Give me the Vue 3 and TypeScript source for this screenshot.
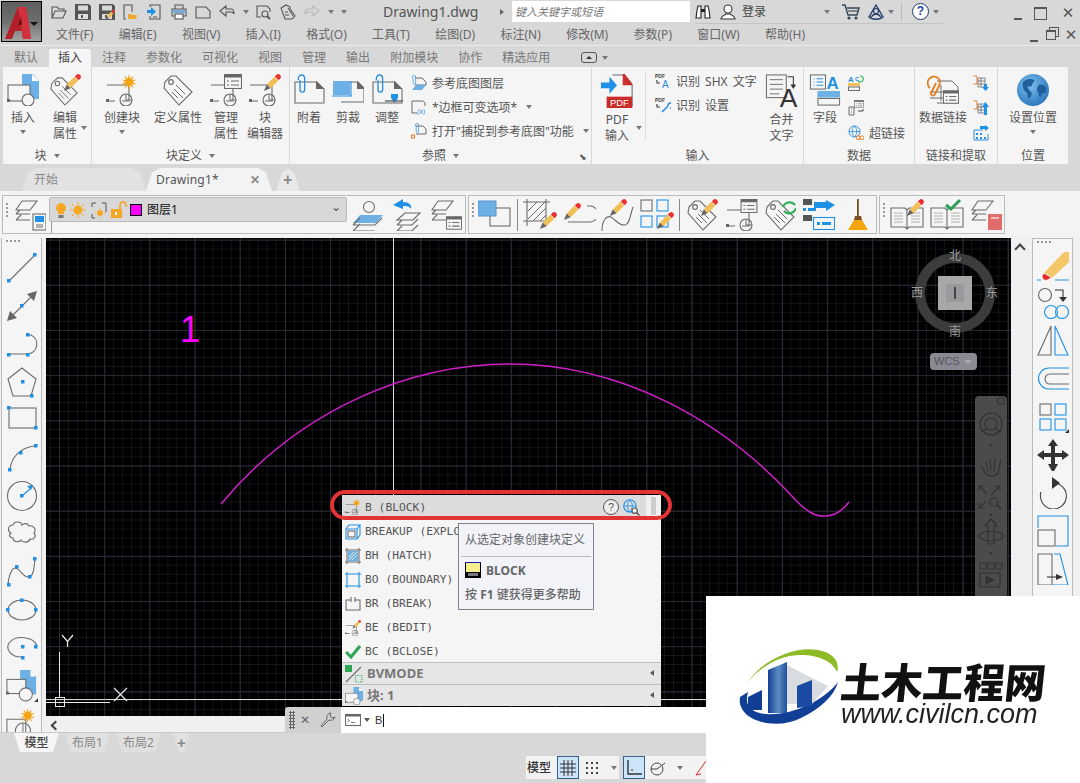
<template>
  <div class="app">
    <!-- shared icon drawings -->
    <svg class="defs" width="0" height="0">
      <defs>
        <radialGradient id="globe-fill" cx="40%" cy="35%" r="70%">
          <stop offset="0" stop-color="#7cc0ee" />
          <stop offset="1" stop-color="#2a75bb" />
        </radialGradient>
        <linearGradient id="tower-fill" x1="0" x2="1" y1="0" y2="0">
          <stop offset="0" stop-color="#123f96" />
          <stop offset="0.55" stop-color="#5f8cc4" />
          <stop offset="1" stop-color="#1d4fa0" />
        </linearGradient>
        <symbol id="pen" viewBox="0 0 20 20">
          <polygon points="5,11 13,3 17,7 9,15" fill="#f0bf55" stroke="none" />
          <polygon points="5,11 9,15 2,18" fill="#666" stroke="none" />
          <path d="M13.5 2.5l1.5-1.5a2.6 2.6 0 0 1 4 4l-1.5 1.5z" fill="#ec2f2f" stroke="none" />
        </symbol>
        <symbol id="clip" viewBox="0 0 10 20">
          <path d="M2 6V4a3 3 0 0 1 6 0v11a2.2 2.2 0 0 1-4.400 0V6" stroke="#2a8fe0" stroke-width="1.300" fill="none" />
        </symbol>
        <symbol id="tag" viewBox="0 0 32 32">
          <path d="M3 8l6-6 5 0 16 16-13 13L2 14z" />
          <circle cx="9" cy="8" r="2.400" />
          <path d="M14 11l9 9M12 15l9 9M10 18l6 6" stroke-width="1" />
        </symbol>
        <symbol id="base" viewBox="0 0 32 32">
          <path d="M1 11h22v16H16M9 27H1z" />
          <circle cx="20" cy="26" r="6" />
          <path d="M20 20v6h6" stroke-width="1" />
          <rect x="0" y="25" width="3" height="3" fill="#666" stroke="none" />
        </symbol>
        <symbol id="card" viewBox="0 0 18 15">
          <rect x="0.500" y="0.500" width="17" height="14" fill="#f5f5f5" />
          <rect x="0.500" y="0.500" width="17" height="3" fill="#666" stroke="none" />
          <path d="M3 7h2M7 7h8M3 11h2M7 11h8" stroke-width="1.200" />
        </symbol>
        <symbol id="page" viewBox="0 0 32 32">
          <path d="M2 8h22l7 7v14H2z" />
          <path d="M23 7l8 8h-8z" fill="#666" stroke="none" />
        </symbol>

        <symbol id="i-insert" viewBox="0 0 32 32">
          <path d="M15 0h11l6 7v18H15z" fill="#6cb0e6" stroke="none" />
          <path d="M25 0l7 7h-7z" fill="#fff" stroke="none" />
          <rect x="1" y="11" width="22" height="16" fill="#f5f5f5" />
          <circle cx="21" cy="26" r="6" fill="#f5f5f5" />
          <rect x="0" y="25" width="3" height="3" fill="#666" stroke="none" />
        </symbol>
        <symbol id="i-editattr" viewBox="0 0 32 32">
          <use href="#tag" width="30" height="30" y="2" />
          <use href="#pen" x="13" y="0" width="19" height="19" />
        </symbol>
        <symbol id="i-create" viewBox="0 0 32 32">
          <use href="#base" />
          <polygon :points="burst(23, 8, 8, 3.500, 10)" fill="#f4a20f" stroke="none" />
        </symbol>
        <symbol id="i-attmgr" viewBox="0 0 32 32">
          <use href="#base" />
          <use href="#card" x="14" y="0" width="18" height="15" />
        </symbol>
        <symbol id="i-bedit" viewBox="0 0 32 32">
          <use href="#base" />
          <use href="#pen" x="13" y="0" width="19" height="19" />
        </symbol>
        <symbol id="i-attach" viewBox="0 0 32 32">
          <use href="#page" />
          <use href="#clip" x="3" y="0" width="11" height="21" />
        </symbol>
        <symbol id="i-clipdoc" viewBox="0 0 32 32">
          <path d="M9 14V8h17l6 6v14H9" />
          <path d="M25 7l8 8h-8z" fill="#666" stroke="none" />
          <rect x="1" y="7" width="17" height="14" fill="#6cb0e6" stroke="none" />
          <path d="M0 22h20M19 7v15" stroke="#2a8fe0" />
        </symbol>
        <symbol id="i-adjust" viewBox="0 0 32 32">
          <use href="#page" />
          <use href="#clip" x="3" y="0" width="11" height="21" />
          <path d="M20 20h7v4l-3.500 5-3.500-5z" fill="#1e90e6" stroke="none" />
          <path d="M14 27h18" stroke-width="1.400" stroke="#666" />
        </symbol>
        <symbol id="s-underlay" viewBox="0 0 16 16">
          <path d="M4 3h7l4 4v3H4" stroke-width="1" />
          <use href="#clip" x="0" y="0" width="6" height="11" />
          <path d="M1 15l4-5h10l-4 5z" fill="#6cb0e6" stroke="none" />
        </symbol>
        <symbol id="s-frame" viewBox="0 0 16 16">
          <path d="M6 14H1V2h11l2 2v3" stroke-width="1" />
          <text x="6" y="15" font-size="7" fill="#2a8fe0" stroke="none" font-style="italic" font-family="Liberation Sans">(x)</text>
        </symbol>
        <symbol id="s-snap" viewBox="0 0 16 16">
          <path d="M5 3h7l3 3v5H5" stroke-width="1" />
          <use href="#clip" x="3" y="0" width="6" height="11" />
          <rect x="0.500" y="12" width="3" height="3" stroke="#e67a1e" stroke-width="1" />
        </symbol>
        <symbol id="i-pdf" viewBox="0 0 34 36">
          <path d="M12 1h13l8 10v23H7V24" />
          <path d="M23 0h2l8 10v2H23z" fill="#c9302c" stroke="none" />
          <rect x="6" y="24" width="27" height="12" fill="#cb2b2b" stroke="none" />
          <text x="19.500" y="34" font-size="10" font-family="Liberation Sans" fill="#fff" stroke="none" text-anchor="middle">PDF</text>
          <path d="M0 10h9V4l8 9-8 9v-6H0z" fill="#1e90e6" stroke="none" transform="translate(0 -1)" />
        </symbol>
        <symbol id="s-pdfa" viewBox="0 0 16 16">
          <text x="0" y="5" font-size="5" font-weight="700" font-family="Liberation Sans" fill="#444" stroke="none">PDF</text>
          <path d="M2 7v3h3" stroke="#444" stroke-width="1.200" />
          <text x="7" y="15" font-size="10" font-family="Liberation Sans" fill="#2a8fe0" stroke="none">A</text>
        </symbol>
        <symbol id="s-pdfw" viewBox="0 0 16 16">
          <text x="0" y="5" font-size="5" font-weight="700" font-family="Liberation Sans" fill="#444" stroke="none">PDF</text>
          <path d="M2 7v3h3" stroke="#444" stroke-width="1.200" />
          <path d="M7 15l6-6M13 9a2.500 2.500 0 1 1 2 2" stroke="#2a8fe0" stroke-width="1.600" />
        </symbol>
        <symbol id="i-merge" viewBox="0 0 34 36">
          <rect x="0.500" y="1" width="21" height="24" fill="#f5f5f5" />
          <path d="M4 6h14M4 11h14M4 16h14M4 21h10" stroke-width="1" />
          <path d="M23 3h6v9" stroke="#333" />
          <path d="M26 11h6l-3 5z" fill="#333" stroke="none" />
          <text x="24" y="35" font-size="28" font-family="Liberation Sans" fill="#333" stroke="none" text-anchor="middle">A</text>
        </symbol>
        <symbol id="i-field" viewBox="0 0 32 34">
          <rect x="0.500" y="1" width="16" height="15" />
          <path d="M4 5h1M7 5h7M4 8.500h1M7 8.500h7M4 12h1M7 12h7" stroke="#2a8fe0" stroke-width="1.200" />
          <text x="24" y="16" font-size="18" font-weight="700" font-family="Liberation Sans" fill="#1e90e6" stroke="none" text-anchor="middle">A</text>
          <rect x="8" y="18" width="24" height="7" fill="#6cb0e6" stroke="none" />
          <rect x="8.500" y="26" width="23" height="7" />
        </symbol>
        <symbol id="s-fieldedit" viewBox="0 0 16 16">
          <text x="0" y="7" font-size="8" font-weight="700" font-family="Liberation Sans" fill="#2a8fe0" stroke="none">A</text>
          <text x="7" y="6" font-size="6" font-weight="700" font-family="Liberation Sans" fill="#2a8fe0" stroke="none">C</text>
          <path d="M12 1a3 3 0 1 1-2 5" stroke="#3bb35f" stroke-width="1.200" />
          <rect x="0" y="8" width="12" height="3" fill="#f0bf55" stroke="none" />
          <rect x="0.500" y="12" width="11" height="3.500" stroke-width="1" />
        </symbol>
        <symbol id="s-tablejump" viewBox="0 0 16 16">
          <use href="#card" x="6" y="0" width="10" height="8" />
          <path d="M1 7h5v8H1zM3 9h1M3 12h1" stroke-width="1" />
          <path d="M15 9v2h-5" stroke="#444" stroke-width="1" />
        </symbol>
        <symbol id="s-link" viewBox="0 0 16 16">
          <circle cx="6.500" cy="6.500" r="5.500" stroke="#2a8fe0" stroke-width="1" />
          <path d="M1 6.500h11M6.500 1c-3 3-3 8 0 11M6.500 1c3 3 3 8 0 11" stroke="#2a8fe0" stroke-width="0.800" />
          <rect x="8.500" y="11" width="4" height="3.500" rx="1.500" stroke="#e67a1e" stroke-width="1" fill="#f5f5f5" />
          <rect x="12" y="11" width="4" height="3.500" rx="1.500" stroke="#e67a1e" stroke-width="1" />
        </symbol>
        <symbol id="i-datalink" viewBox="0 0 32 32">
          <path d="M10 7h15l6 6v16H10" stroke-width="1" />
          <path d="M3 18h18M3 24h18M14 11v16" stroke-width="1" />
          <path d="M3 14a4 4 0 0 1 8-10c3 2 2 7 0 10l-3 6a2 2 0 0 1-4-1l5-10" stroke="#e67a1e" stroke-width="1.800" />
          <use href="#card" x="16" y="16" width="16" height="14" />
        </symbol>
        <symbol id="s-lnkdown" viewBox="0 0 16 16">
          <path d="M1 2a1.500 1.500 0 0 1 3 0v6a1.500 1.500 0 0 1-3 0" stroke="#e67a1e" stroke-width="1" />
          <path d="M5 3h7v9H5zM5 6h7M5 9h7M8 3v9" stroke-width="0.800" />
          <path d="M11 9h3v3h2l-3.500 4-3.500-4h2z" fill="#1e90e6" stroke="none" />
        </symbol>
        <symbol id="s-lnkup" viewBox="0 0 16 16">
          <path d="M1 2a1.500 1.500 0 0 1 3 0v6a1.500 1.500 0 0 1-3 0" stroke="#e67a1e" stroke-width="1" />
          <path d="M5 4h7v9H5zM5 7h7M5 10h7M8 4v9" stroke-width="0.800" />
          <path d="M11 15V7H9l3.500-5L16 7h-2v8z" fill="#1e90e6" stroke="none" />
        </symbol>
        <symbol id="s-extract" viewBox="0 0 16 16">
          <path d="M1 5h9M1 5v10h14V9" stroke="#2a8fe0" stroke-width="1" />
          <path d="M7 1h5V0l4 3-4 3V4H7z" fill="#1e90e6" stroke="none" />
          <path d="M3 8h2v2H3zM7 8h2v2H7zM3 12h2v2H3zM7 12h2v2H7zM11 12h2v2h-2z" fill="#2a8fe0" stroke="none" />
        </symbol>
        <symbol id="i-globe" viewBox="0 0 32 32">
          <circle cx="16" cy="16" r="16" fill="url(#globe-fill)" stroke="none" />
          <path d="M6 8c3-3 8-4 11-2 1 2-2 3-2 5s-3 2-4 1 0 4 3 6c2 2-1 6-2 7-2-2-1-6-3-7S5 13 6 8z" fill="#1f5f9c" stroke="none" />
          <path d="M22 11c2-1 5 0 7 2 1 4-1 7-3 6-2 0-1 3-3 4-2-2-1-5-3-6 0-2 0-4 2-6z" fill="#1f5f9c" stroke="none" />
        </symbol>

        <!-- quick access bar -->
        <symbol id="q-open" viewBox="0 0 16 16">
          <path d="M1 14V3h5l2 2h5v2M1 14l3-7h11l-3 7z" stroke="#555" />
        </symbol>
        <symbol id="q-save" viewBox="0 0 16 16">
          <path d="M0 0h14l2 2v14H0z" fill="#555" stroke="none" />
          <rect x="3" y="1.500" width="10" height="5" fill="#d8d8d8" stroke="none" />
          <rect x="3" y="10" width="10" height="5" fill="#ddd" stroke="none" />
          <rect x="6" y="11" width="2" height="3" fill="#555" stroke="none" />
        </symbol>
        <symbol id="q-saveas" viewBox="0 0 16 16">
          <use href="#q-save" />
          <use href="#pen" x="5" y="6" width="11" height="11" />
        </symbol>
        <symbol id="q-phoneopen" viewBox="0 0 16 16">
          <path d="M3 15H1V1h8v7" stroke="#555" />
          <path d="M5 15v-5h3l1 1h5l-1 4z" fill="#f0a72e" stroke="none" />
        </symbol>
        <symbol id="q-phoneup" viewBox="0 0 16 16">
          <path d="M3 3V1h10v14H3v-3M6 13h4" stroke="#555" />
          <path d="M0 6h4V3l5 4.500L4 12V9H0z" fill="#1e90e6" stroke="none" />
        </symbol>
        <symbol id="q-print" viewBox="0 0 16 16">
          <path d="M4 5V1h8v4M4 12H1V5h14v7h-3" stroke="#555" />
          <rect x="4" y="10" width="8" height="5" fill="#fff" stroke="#555" />
          <rect x="1" y="6" width="14" height="3" fill="#7aa9d8" stroke="none" />
        </symbol>
        <symbol id="q-sheet" viewBox="0 0 16 16">
          <path d="M1 3h10l4 4v7H1z" stroke="#555" />
        </symbol>
        <symbol id="q-undo" viewBox="0 0 16 16">
          <path d="M1 7l6-5v3h5c2 0 3 2 3 5-1-2-2-2-3-2H7v4z" stroke="#555" />
        </symbol>
        <symbol id="q-redo" viewBox="0 0 16 16">
          <path d="M15 7L9 2v3H4C2 5 1 7 1 10c1-2 2-2 3-2h5v4z" stroke="#b8b8b8" />
        </symbol>
        <symbol id="q-preview" viewBox="0 0 16 16">
          <path d="M5 13H1V2h10l3 3v3" stroke="#555" />
          <circle cx="9" cy="10" r="3" stroke="#555" />
          <path d="M11 12l3 3" stroke="#555" stroke-width="2" />
        </symbol>
        <symbol id="q-publish" viewBox="0 0 16 16">
          <path d="M1 4l5-3 4 2 0 2 5 7-3 3H5z" stroke="#555" />
          <path d="M8 4l5 8M5 8h3M5 11h4" stroke="#555" stroke-width="1" />
        </symbol>
        <symbol id="q-bino" viewBox="0 0 16 16">
          <path d="M1 14l1-8 1-4h3v12zM15 14l-1-8-1-4h-3v12z" fill="#fff" stroke="#222" />
          <path d="M6 5h4v3H6z" fill="#222" stroke="none" />
        </symbol>
        <symbol id="q-user" viewBox="0 0 16 16">
          <circle cx="8" cy="5" r="4" stroke="#333" fill="#fff" />
          <path d="M1 15c0-3 4-4 5-5h4c1 1 5 2 5 5z" stroke="#333" fill="#fff" />
        </symbol>
        <symbol id="q-cart" viewBox="0 0 18 16">
          <path d="M0 1h3l3 10h9l2-7H5" stroke="#345" stroke-width="1.400" />
          <circle cx="7" cy="14" r="1.600" fill="#345" stroke="none" />
          <circle cx="14" cy="14" r="1.600" fill="#345" stroke="none" />
          <path d="M6 7h10" stroke="#345" />
        </symbol>
        <symbol id="q-a360" viewBox="0 0 16 16">
          <path d="M8 1L1 13c3 3 11 3 14 0z" stroke="#223a66" stroke-width="1.300" />
          <path d="M3 13c3-4 7-4 10 0" stroke="#223a66" stroke-width="1.300" />
          <circle cx="8" cy="7" r="2.500" stroke="#223a66" />
        </symbol>

        <!-- toolbars -->
        <symbol id="t-layers" viewBox="0 0 32 32">
          <path d="M8 2h15l-7 9H2zM2 15l4-4M2 15h14M2 21l5-5M2 21h14" />
        </symbol>
        <symbol id="t-layerprop" viewBox="0 0 32 32">
          <use href="#t-layers" />
          <rect x="19" y="15" width="13" height="16" fill="#f5f5f5" />
          <rect x="21" y="17" width="9" height="6" fill="#1e90e6" stroke="none" />
          <path d="M22 26h7M22 28h7" stroke-width="1" />
        </symbol>
        <symbol id="t-match" viewBox="0 0 32 32">
          <path d="M8 16h23l-7 8H1z" fill="#6cb0e6" stroke="none" />
          <circle cx="17" cy="8" r="5.500" fill="#f5f5f5" />
          <path d="M1 26l7-7M1 26h22l7-7M1 32l7-7M1 32h22" />
        </symbol>
        <symbol id="t-prev" viewBox="0 0 32 32">
          <path d="M12 10l-10-4 10-6v3c6 0 9 3 8 7-2-3-4-3-8-3z" fill="#1e90e6" stroke="none" />
          <path d="M14 14h15l-7 7H6zM6 21l0 0M6 26l5-5M6 26h15l6-6M6 32l5-5M6 32h15l6-6" />
        </symbol>
        <symbol id="t-states" viewBox="0 0 32 32">
          <use href="#t-layers" />
          <use href="#card" x="16" y="17" width="16" height="14" />
        </symbol>
        <symbol id="t-overlap" viewBox="0 0 34 32">
          <rect x="12" y="9" width="20" height="18" />
          <rect x="0" y="0" width="18" height="15" fill="#6cb0e6" stroke="#5c9bd0" transform="translate(0 2)" />
        </symbol>
        <symbol id="t-hatch" viewBox="0 0 34 32">
          <path d="M0 3h27M0 22h27M4 0v27M23 0v27" />
          <path d="M5 12L14 3M5 20L22 3M10 22L23 9M17 22l6-6" stroke-width="1" />
          <use href="#pen" x="15" y="13" width="19" height="19" />
        </symbol>
        <symbol id="t-penarc" viewBox="0 0 34 32">
          <path d="M6 23h22a8 8 0 0 0 0-16h-3" />
          <use href="#pen" x="0" y="4" width="19" height="19" />
        </symbol>
        <symbol id="t-penspline" viewBox="0 0 34 32">
          <path d="M1 32c0-10 4-16 9-14 4 2 8 9 14 8 5-1 5-10 8-18" />
          <use href="#pen" x="7" y="0" width="19" height="19" />
        </symbol>
        <symbol id="t-penarray" viewBox="0 0 34 32">
          <rect x="1" y="1" width="11" height="11" />
          <rect x="17" y="1" width="11" height="11" stroke="#1e90e6" />
          <rect x="1" y="17" width="11" height="11" stroke="#1e90e6" />
          <rect x="17" y="17" width="11" height="11" stroke="#1e90e6" />
          <use href="#pen" x="15" y="13" width="19" height="19" />
        </symbol>
        <symbol id="t-tagpen" viewBox="0 0 34 32">
          <use href="#tag" />
          <use href="#pen" x="14" y="0" width="19" height="19" />
        </symbol>
        <symbol id="t-attcard" viewBox="0 0 32 32">
          <use href="#base" />
          <use href="#card" x="14" y="0" width="18" height="14" />
        </symbol>
        <symbol id="t-tagsync" viewBox="0 0 32 32">
          <use href="#tag" />
          <path d="M19 8a7 7 0 0 1 12-2M32 9a7 7 0 0 1-12 3" stroke="#2fae5b" stroke-width="2.200" />
        </symbol>
        <symbol id="t-flow" viewBox="0 0 32 32">
          <rect x="0" y="0" width="9" height="6" fill="#555" stroke="none" />
          <path d="M11 1h12V-1l9 5-9 6V7H11z" fill="#1e90e6" stroke="none" transform="translate(0 2)" />
          <rect x="0" y="9" width="3" height="3" fill="#1e90e6" stroke="none" />
          <rect x="5" y="9" width="8" height="3" fill="#1e90e6" stroke="none" />
          <rect x="0" y="16" width="9" height="6" fill="#555" stroke="none" />
          <rect x="10.500" y="18.500" width="21" height="12" stroke="#1e90e6" />
          <rect x="14" y="23" width="3" height="3" fill="#1e90e6" stroke="none" />
          <rect x="19" y="23" width="9" height="3" fill="#1e90e6" stroke="none" />
        </symbol>
        <symbol id="t-broom" viewBox="0 0 22 32">
          <rect x="10" y="0" width="1.800" height="18" fill="#7a4e20" stroke="none" />
          <path d="M8 17h6l1 4H7z" fill="#7a4e20" stroke="none" />
          <path d="M7 21h8l6 10H1z" fill="#f5a50c" stroke="none" />
        </symbol>
        <symbol id="t-book" viewBox="0 0 34 32">
          <path d="M1 9h14l2 2 2-2h14v19H19l-2 2-2-2H1zM17 11v19" />
          <path d="M4 14h9M4 17h9M4 20h9M4 23h9M21 14h9M21 17h9M21 20h9M21 23h9" stroke-width="0.900" stroke="#aaa" />
        </symbol>
        <symbol id="t-bookpen" viewBox="0 0 34 32">
          <use href="#t-book" />
          <use href="#pen" x="15" y="0" width="19" height="19" />
        </symbol>
        <symbol id="t-bookcheck" viewBox="0 0 34 32">
          <use href="#t-book" />
          <path d="M16 6l5 4 9-9" stroke="#2f9e55" stroke-width="3" />
        </symbol>
        <symbol id="t-layerbook" viewBox="0 0 32 32">
          <use href="#t-layers" />
          <path d="M18 15h14v16H18z" fill="#e06c6c" stroke="none" />
          <path d="M21 19h8" stroke="#fff" />
        </symbol>

        <!-- left drawing tools -->
        <symbol id="d-line" viewBox="0 0 32 32">
          <path d="M3 29L29 3" />
          <rect x="27" y="1" width="3.500" height="3.500" fill="#1e90e6" stroke="none" />
          <rect x="1" y="27" width="3.500" height="3.500" fill="#1e90e6" stroke="none" />
        </symbol>
        <symbol id="d-dim" viewBox="0 0 32 32">
          <path d="M4 28L28 4" />
          <path d="M31 1l-3 10-7-7zM1 31l3-10 7 7z" fill="#666" stroke="none" />
          <rect x="14" y="14" width="3.500" height="3.500" fill="#1e90e6" stroke="none" />
        </symbol>
        <symbol id="d-parc" viewBox="0 0 32 32">
          <path d="M2 26h20M22 26a10 10 0 0 0 3-19h-4" />
          <rect x="1" y="25" width="3.500" height="3.500" fill="#1e90e6" stroke="none" />
          <rect x="20" y="25" width="3.500" height="3.500" fill="#1e90e6" stroke="none" />
          <rect x="20" y="5" width="3.500" height="3.500" fill="#1e90e6" stroke="none" />
        </symbol>
        <symbol id="d-poly" viewBox="0 0 32 32">
          <path d="M16 2l14 11-5 17H7L2 13z" />
          <rect x="15" y="14" width="3.500" height="3.500" fill="#1e90e6" stroke="none" />
          <rect x="24" y="28" width="3.500" height="3.500" fill="#1e90e6" stroke="none" />
        </symbol>
        <symbol id="d-rect" viewBox="0 0 32 32">
          <rect x="3" y="4" width="27" height="20" />
          <rect x="1" y="2" width="3.500" height="3.500" fill="#1e90e6" stroke="none" />
          <rect x="28" y="22" width="3.500" height="3.500" fill="#1e90e6" stroke="none" />
        </symbol>
        <symbol id="d-arc" viewBox="0 0 32 32">
          <path d="M4 28C5 14 16 5 29 4" />
          <rect x="2" y="26" width="3.500" height="3.500" fill="#1e90e6" stroke="none" />
          <rect x="13" y="9" width="3.500" height="3.500" fill="#1e90e6" stroke="none" />
          <rect x="28" y="2" width="3.500" height="3.500" fill="#1e90e6" stroke="none" />
        </symbol>
        <symbol id="d-circle" viewBox="0 0 32 32">
          <circle cx="16" cy="16" r="14.500" />
          <path d="M16 16l9-8" stroke="#1e90e6" />
          <path d="M27 5l-6 1 4 4z" fill="#1e90e6" stroke="none" />
          <rect x="14" y="14" width="3.500" height="3.500" fill="#1e90e6" stroke="none" />
        </symbol>
        <symbol id="d-cloud" viewBox="0 0 32 32">
          <path d="M5 15c-4-2-3-8 2-8 1-4 8-4 9 0 2-2 6-2 7 1 4-1 8 3 5 7 3 3 0 7-4 6-1 4-7 4-9 1-3 3-8 2-8-2-3 0-5-3-2-5z" />
        </symbol>
        <symbol id="d-spline" viewBox="0 0 32 32">
          <path d="M2 30c0-8 3-17 7-18 5 0 8 10 14 9 5-1 5-10 6-19" />
          <rect x="1" y="27" width="3.500" height="3.500" fill="#1e90e6" stroke="none" />
          <rect x="9" y="9" width="3.500" height="3.500" fill="#1e90e6" stroke="none" />
          <rect x="22" y="19" width="3.500" height="3.500" fill="#1e90e6" stroke="none" />
          <rect x="27" y="1" width="3.500" height="3.500" fill="#1e90e6" stroke="none" />
        </symbol>
        <symbol id="d-ellipse" viewBox="0 0 32 32">
          <ellipse cx="16" cy="16" rx="14" ry="10" />
          <rect x="14" y="4.500" width="3.500" height="3.500" fill="#1e90e6" stroke="none" />
          <rect x="0" y="14" width="3.500" height="3.500" fill="#1e90e6" stroke="none" />
          <rect x="28" y="14" width="3.500" height="3.500" fill="#1e90e6" stroke="none" />
        </symbol>
        <symbol id="d-elarc" viewBox="0 0 32 32">
          <path d="M31 14C28 5 10 2 3 11c-4 7 3 14 12 14" />
          <rect x="15" y="13" width="3.500" height="3.500" fill="#1e90e6" stroke="none" />
          <rect x="28" y="13" width="3.500" height="3.500" fill="#1e90e6" stroke="none" />
          <rect x="15" y="24" width="3.500" height="3.500" fill="#1e90e6" stroke="none" />
        </symbol>
        <symbol id="d-insert" viewBox="0 0 34 34">
          <path d="M15 0h11l6 7v19H15z" fill="#6cb0e6" stroke="none" />
          <path d="M26 0l6 7h-6z" fill="#fff" stroke="none" />
          <rect x="1" y="10" width="20" height="15" fill="#f5f5f5" />
          <circle cx="21" cy="26" r="7" fill="#f5f5f5" />
          <rect x="0" y="23" width="3" height="3" fill="#666" stroke="none" />
          <path d="M34 34h-4l4-4z" fill="#333" stroke="none" />
        </symbol>
        <symbol id="d-create" viewBox="0 0 34 34">
          <path d="M1 12h20v16H1z" />
          <circle cx="18" cy="24" r="8" />
          <path d="M18 16v16" stroke-width="1" />
          <rect x="0" y="27" width="3" height="3" fill="#666" stroke="none" />
          <polygon :points="burst(23, 8, 8, 3.500, 10)" fill="#f4a20f" stroke="none" />
        </symbol>

        <!-- right modify tools -->
        <symbol id="m-erase" viewBox="0 0 32 32">
          <path d="M7 24L27 3h5v10L15 29z" fill="#f5c667" stroke="none" />
          <path d="M7 24l8 5-3 1a4 4 0 0 1-7-3z" fill="#e32b2b" stroke="#fff" stroke-width="0.800" />
          <path d="M0 31h4M18 31h14" stroke="#2a8fe0" />
        </symbol>
        <symbol id="m-copy" viewBox="0 0 32 32">
          <circle cx="8" cy="8" r="6.500" stroke="#666" />
          <path d="M18 3h8v8" stroke="#333" />
          <path d="M22 10h8l-4 5z" fill="#333" stroke="none" />
          <circle cx="14" cy="25" r="6.500" stroke="#1e90e6" />
          <circle cx="25" cy="25" r="6.500" stroke="#1e90e6" />
        </symbol>
        <symbol id="m-mirror" viewBox="0 0 32 32">
          <path d="M14 1v29H1z" />
          <path d="M18 1v29h13z" stroke="#1e90e6" />
        </symbol>
        <symbol id="m-offset" viewBox="0 0 32 32">
          <path d="M32 5H12a10.500 10.500 0 0 0 0 21h20" stroke="#1e90e6" />
          <path d="M32 11H13a5 5 0 0 0 0 10h19" />
        </symbol>
        <symbol id="m-array" viewBox="0 0 32 32">
          <rect x="3" y="3" width="11" height="11" />
          <rect x="18" y="3" width="11" height="11" stroke="#1e90e6" />
          <rect x="3" y="18" width="11" height="11" stroke="#1e90e6" />
          <rect x="18" y="18" width="11" height="11" stroke="#1e90e6" />
          <path d="M32 32h-4l4-4z" fill="#333" stroke="none" />
        </symbol>
        <symbol id="m-move" viewBox="0 0 32 32">
          <path d="M16 0l5 7h-3v7h7v-3l7 5-7 5v-3h-7v7h3l-5 9-5-9h3v-7H7v3l-7-5 7-5v3h7V7h-3z" fill="#333" stroke="none" />
        </symbol>
        <symbol id="m-rotate" viewBox="0 0 32 32">
          <path d="M16 6a13 13 0 1 1-12 9" stroke="#444" />
          <path d="M15 0l8 6-8 6z" fill="#333" stroke="none" />
        </symbol>
        <symbol id="m-scale" viewBox="0 0 32 32">
          <path d="M1 13V1h30v30H19" stroke="#1e90e6" />
          <rect x="1" y="15" width="17" height="16" />
        </symbol>
        <symbol id="m-stretch" viewBox="0 0 32 32">
          <path d="M1 1h14v31H1z" />
          <path d="M17 1h6l8 31H15" stroke="#1e90e6" />
          <path d="M10 24h12" stroke="#333" />
          <path d="M19 21l7 3-7 3z" fill="#333" stroke="none" />
        </symbol>
        <symbol id="m-next" viewBox="0 0 32 16">
          <path d="M1 3h16" stroke="#1e90e6" stroke-dasharray="4 2" />
          <path d="M20 0l5 3-5 3zM25 3h6" fill="#333" stroke="#555" />
          <rect x="1" y="8" width="30" height="8" />
        </symbol>

        <!-- autocomplete list -->
        <symbol id="l-break" viewBox="0 0 16 16">
          <path d="M6 4H1v10h14V4h-5M6 1v5M10 1v5" />
        </symbol>
        <symbol id="l-explode" viewBox="0 0 16 16">
          <path d="M1 5h11v10H1zM1 5l3-4h11l-3 4M15 1v10l-3 4" stroke="#1e90e6" />
          <rect x="3" y="7" width="7" height="6" />
        </symbol>
        <symbol id="l-hatch" viewBox="0 0 16 16">
          <path d="M0 2h16M0 14h16M2 0v16M14 0v16" />
          <rect x="3" y="3" width="10" height="10" fill="#6cb0e6" stroke="none" />
          <path d="M4 9l5-5M4 12l8-8M7 12l5-5" stroke="#f5f5f5" stroke-width="0.900" />
        </symbol>
        <symbol id="l-boundary" viewBox="0 0 16 16">
          <path d="M0 2h16M0 14h16M2 0v16M14 0v16" stroke="#1e90e6" />
        </symbol>
        <symbol id="l-check" viewBox="0 0 16 16">
          <path d="M1 8l5 5 9-11" stroke="#2fa652" stroke-width="3" />
        </symbol>
        <symbol id="l-bv" viewBox="0 0 18 18">
          <path d="M1 17L16 2" />
          <rect x="0" y="0" width="7" height="7" fill="#2fa652" stroke="none" />
          <rect x="10.500" y="10.500" width="6.500" height="6.500" stroke="#2fa652" stroke-dasharray="1 1" />
        </symbol>
        <symbol id="l-term" viewBox="0 0 16 12">
          <rect x="0.500" y="0.500" width="15" height="11" />
          <rect x="0.500" y="0.500" width="15" height="2" fill="#666" stroke="none" />
          <path d="M2.500 5l2 1.500-2 1.500M6 8.500h4" stroke-width="0.900" />
        </symbol>
        <symbol id="l-web" viewBox="0 0 16 16">
          <circle cx="6.500" cy="6.500" r="5.800" stroke="#1e90e6" />
          <path d="M1 6.500h11M6.500 1c-3 3-3 8 0 11M6.500 1c3 3 3 8 0 11" stroke="#1e90e6" stroke-width="0.800" />
          <circle cx="11" cy="11" r="2.500" stroke="#555" fill="#eee" />
          <path d="M13 13l2.500 2.500" stroke="#555" stroke-width="1.300" />
        </symbol>
        <symbol id="l-blocktip" viewBox="0 0 16 16">
          <rect x="0" y="0" width="16" height="16" fill="#000" stroke="none" />
          <rect x="0" y="0" width="16" height="1" fill="#1a1ac0" stroke="none" />
          <rect x="1" y="1" width="14" height="9" fill="#f5ee8a" stroke="none" />
          <rect x="3" y="11" width="10" height="3" fill="#777" stroke="none" />
        </symbol>
      </defs>
    </svg>

    <!-- title bar -->
    <header class="titlebar">
      <div class="qat">
        <template v-for="(q, i) in qat" :key="i">
          <i v-if="q === '^'" class="caret"></i>
          <Ico v-else :n="q" :s="16" />
        </template>
      </div>
      <div class="doc-name">Drawing1.dwg</div>
      <i class="arrow-right"></i>
      <div class="search">键入关键字或短语</div>
      <div class="account">
        <Ico n="q-bino" :s="16" />
        <Ico n="q-user" :s="16" class="user-ico" />
        <span class="login">登录</span>
        <i class="caret login-caret"></i>
        <Ico n="q-cart" :s="18" class="cart" />
        <Ico n="q-a360" :s="16" />
        <i class="caret"></i>
        <span class="vsep"></span>
        <span class="help">?</span>
        <i class="caret"></i>
      </div>
      <div class="winbtns top">
        <span class="w-min"></span>
        <span class="w-max"></span>
        <span class="w-close">✕</span>
      </div>
    </header>

    <nav class="menubar">
      <span v-for="m in menus" :key="m">{{ m }}</span>
      <div class="winbtns inner">
        <span class="w-min"></span>
        <span class="w-restore"></span>
        <span class="w-close">✕</span>
      </div>
    </nav>

    <div class="ribbon-tabs">
      <span v-for="t in ribbonTabs" :key="t" class="rt" :class="{ active: t === '插入' }">{{ t }}</span>
      <span class="rt-toggle"><i></i></span><i class="caret"></i>
    </div>

    <section class="ribbon">
      <div class="panel p-block">
        <div class="body">
          <div class="tool"><Ico n="i-insert" /><span>插入</span><i class="caret"></i></div>
          <div class="tool"><Ico n="i-editattr" /><span>编辑<br />属性</span><i class="caret side"></i></div>
        </div>
        <div class="label">块<i class="caret"></i></div>
      </div>
      <div class="panel p-def">
        <div class="body">
          <div class="tool"><Ico n="i-create" /><span>创建块</span><i class="caret"></i></div>
          <div class="tool"><Ico n="tag" /><span>定义属性</span></div>
          <div class="tool"><Ico n="i-attmgr" /><span>管理<br />属性</span></div>
          <div class="tool"><Ico n="i-bedit" /><span>块<br />编辑器</span></div>
        </div>
        <div class="label">块定义<i class="caret"></i></div>
      </div>
      <div class="panel p-ref">
        <div class="body">
          <div class="tool"><Ico n="i-attach" /><span>附着</span></div>
          <div class="tool"><Ico n="i-clipdoc" /><span>剪裁</span></div>
          <div class="tool"><Ico n="i-adjust" /><span>调整</span></div>
          <div class="smalls">
            <div class="small"><Ico n="s-underlay" :s="16" />参考底图图层</div>
            <div class="small"><Ico n="s-frame" :s="16" />*边框可变选项*<i class="caret"></i></div>
            <div class="small"><Ico n="s-snap" :s="16" />打开"捕捉到参考底图"功能<i class="caret"></i></div>
          </div>
        </div>
        <div class="label">参照<i class="caret"></i><span class="launcher">⬊</span></div>
      </div>
      <div class="panel p-input">
        <div class="body">
          <div class="tool"><Ico n="i-pdf" :s="34" /><span>PDF<br />输入</span><i class="caret side"></i></div>
          <div class="smalls divided">
            <div class="small"><Ico n="s-pdfa" :s="16" />识别 SHX 文字</div>
            <div class="small"><Ico n="s-pdfw" :s="16" />识别 设置</div>
          </div>
          <div class="tool"><Ico n="i-merge" :s="34" /><span>合并<br />文字</span></div>
        </div>
        <div class="label">输入</div>
      </div>
      <div class="panel p-data">
        <div class="body">
          <div class="tool"><Ico n="i-field" /><span>字段</span></div>
          <div class="smalls stack">
            <div class="small"><Ico n="s-fieldedit" :s="16" /></div>
            <div class="small"><Ico n="s-tablejump" :s="16" /></div>
            <div class="small"><Ico n="s-link" :s="16" />超链接</div>
          </div>
        </div>
        <div class="label">数据</div>
      </div>
      <div class="panel p-link">
        <div class="body">
          <div class="tool"><Ico n="i-datalink" /><span>数据链接</span></div>
          <div class="smalls stack">
            <div class="small"><Ico n="s-lnkdown" :s="16" /></div>
            <div class="small"><Ico n="s-lnkup" :s="16" /></div>
            <div class="small"><Ico n="s-extract" :s="16" /></div>
          </div>
        </div>
        <div class="label">链接和提取</div>
      </div>
      <div class="panel p-loc">
        <div class="body">
          <div class="tool"><Ico n="i-globe" /><span>设置位置</span><i class="caret"></i></div>
        </div>
        <div class="label">位置</div>
      </div>
    </section>

    <div class="doc-tabs">
      <div class="dt dt-start">开始</div>
      <div class="dt dt-active">Drawing1*<span class="dt-x">✕</span></div>
      <div class="dt dt-plus">+</div>
    </div>

    <div class="toolrow">
      <div class="tb tb-layer">
        <span class="grip"></span>
        <Ico n="t-layerprop" />
        <div class="layer-select">
          <svg width="75" height="18" viewBox="0 0 75 18" class="layer-icons">
            <path d="M3 11a5 5 0 1 1 6 0v2H3z" fill="#f5a623" stroke="none" />
            <path d="M3.500 14h5v3h-5z" fill="#777" stroke="none" />
            <circle cx="23" cy="9" r="4.500" fill="#f5a623" stroke="none" />
            <path d="M23 1v3M23 14v3M15 9h3M28 9h3M17 3l2 2M29 3l-2 2M17 15l2-2M29 15l-2-2" stroke="#f5a623" fill="none" />
            <path d="M37 6V2h4M47 2h4v4M37 13v4h3M51 6v5" stroke="#555" fill="none" />
            <circle cx="45" cy="12" r="3" fill="#f5a623" stroke="none" />
            <path d="M45 7v1M45 16v1M40 12h1M49 12h1" stroke="#f5a623" fill="none" />
            <rect x="56" y="8" width="11" height="9" fill="#f5a623" stroke="none" />
            <path d="M65 8V4a3 3 0 0 1 6 0v2" stroke="#f5a623" stroke-width="1.600" fill="none" />
            <rect x="60" y="11" width="2" height="3" fill="#fff" stroke="none" />
          </svg>
          <span class="swatch"></span>
          <span class="layer-name">图层1</span>
          <span class="chev">⌄</span>
        </div>
        <Ico n="t-match" />
        <Ico n="t-prev" />
        <Ico n="t-states" />
      </div>
      <div class="tb tb-edit">
        <span class="grip"></span>
        <Ico n="t-overlap" :s="34" />
        <span class="tb-sep"></span>
        <Ico n="t-hatch" :s="34" />
        <Ico n="t-penarc" :s="34" />
        <Ico n="t-penspline" :s="34" />
        <Ico n="t-penarray" :s="34" />
        <span class="tb-sep"></span>
        <Ico n="t-tagpen" :s="34" />
        <Ico n="t-attcard" class="nudge2" />
        <Ico n="t-tagsync" class="nudge1" />
        <Ico n="t-flow" class="nudge2" />
        <Ico n="t-broom" class="nudge2" />
      </div>
      <div class="tb tb-book">
        <span class="grip"></span>
        <Ico n="t-bookpen" :s="34" />
        <Ico n="t-bookcheck" :s="34" />
        <Ico n="t-layerbook" />
      </div>
    </div>

    <main class="workspace">
      <aside class="side-tools left">
        <span class="grip-h"></span>
        <Ico v-for="d in drawTools" :key="d" :n="d" :s="32" />
      </aside>

      <div class="canvas">
        <svg class="drawing" viewBox="46 239 965 478" width="965" height="478">
          <path d="M393.500 239V496M46 700.500H1011" stroke="#d8d8d8" fill="none" />
          <path
            d="M221 505C300 410 410 365 510 365C620 365 720 420 790 495C805 512 815 518 825 517C835 517 843 511 849 503"
            stroke="#d01fc8"
            stroke-width="1.500"
            fill="none"
          />
          <g stroke="#e8e8e8" fill="none">
            <path d="M59.500 653V698M46 703.500H110" />
            <rect x="55.500" y="698.500" width="9" height="9" />
            <path d="M62 636l5.500 6.500L73 636M67.500 642.500V648" stroke-width="1.200" />
            <path d="M114 689l13 13M127 689l-13 13" stroke-width="1.200" />
          </g>
        </svg>
        <span class="number">1</span>

        <div class="compass">
          <div class="ring"></div>
          <div class="cube"><span></span></div>
          <span class="dir n">北</span>
          <span class="dir s">南</span>
          <span class="dir w">西</span>
          <span class="dir e">东</span>
        </div>
        <div class="wcs">WCS<i></i></div>

        <div class="navbar">
          <svg width="32" height="200" viewBox="0 0 32 200">
            <g fill="none" stroke="#333" stroke-width="1.200">
              <circle cx="26" cy="5" r="3.500" />
              <circle cx="16" cy="28" r="11" />
              <circle cx="16" cy="28" r="6" />
              <path d="M6 36l5-3M26 36l-5-3" />
              <path d="M6 70l5 8c3 3 10 3 12-1l3-14M11 66l2 10M15 62l1 13M20 63l-1 12" />
              <path d="M4 90l8 8M4 90v5M4 90h5M25 90l-9 9M25 90v5M25 90h-5M4 112l7-7M4 112v-5M4 112h5" />
              <circle cx="19" cy="106" r="4" />
              <path d="M22 109l4 4" stroke-width="2" />
              <ellipse cx="16" cy="140" rx="12" ry="5" />
              <path d="M13 148v-18h-3l6-7 6 7h-3v18z" />
              <path d="M5 167h6v6H5zM13 167h6v6h-6zM21 167h6v6h-6zM5 177h20v14H5z" />
              <path d="M11 180l8 4-8 4z" fill="#333" />
            </g>
            <path d="M14 48h4l-2 3zM14 118h4l-2 3zM14 156h4l-2 3z" fill="#333" />
          </svg>
        </div>
      </div>

      <div class="vscroll"><i></i></div>

      <aside class="side-tools right">
        <span class="grip-h"></span>
        <Ico v-for="d in modifyTools" :key="d" :n="d" :s="32" />
        <Ico n="m-next" :s="32" />
      </aside>

      <div class="hscroll"><i></i></div>
    </main>

    <div class="layout-tabs">
      <span class="lt active">模型</span>
      <span class="lt">布局1</span>
      <span class="lt">布局2</span>
      <span class="lt plus">+</span>
    </div>

    <footer class="statusbar">
      <div class="sb-group">
        <span class="sb-model">模型</span>
        <span class="sb-btn on">
          <svg width="16" height="16" viewBox="0 0 16 16"><path d="M0 4h16M0 8h16M0 12h16M4 0v16M8 0v16M12 0v16" stroke="#333" fill="none" /></svg>
        </span>
        <span class="sb-btn">
          <svg width="16" height="16" viewBox="0 0 16 16"><path d="M2 3h2M7 3h2M12 3h2M2 8h2M7 8h2M12 8h2M2 13h2M7 13h2M12 13h2" stroke="#444" stroke-width="2" fill="none" /></svg>
        </span>
        <i class="caret"></i>
      </div>
      <div class="sb-group second">
        <span class="sb-btn on">
          <svg width="16" height="16" viewBox="0 0 16 16"><path d="M2 0v14h14" stroke="#333" stroke-width="1.400" fill="none" /><path d="M5 10h2" stroke="#333" fill="none" /></svg>
        </span>
        <span class="sb-btn">
          <svg width="16" height="16" viewBox="0 0 16 16"><circle cx="7" cy="9" r="6" stroke="#444" fill="none" /><path d="M7 9l8-6M1 9h6" stroke="#444" fill="none" /></svg>
        </span>
        <i class="caret"></i>
        <span class="sb-btn">
          <svg width="16" height="16" viewBox="0 0 16 16"><path d="M3 15L13 1M3 15l5-1" stroke="#c33" fill="none" /></svg>
        </span>
      </div>
    </footer>

    <!-- floating pieces -->
    <div class="app-button">
      <svg width="36" height="36" viewBox="0 0 36 36">
        <path d="M2 35L15 3h8l5 32h-8l-1-8h-7l-3 8z" fill="#b3202a" />
        <path d="M15 3h8l5 32h-8z" fill="#d2303a" />
        <path d="M15 21h4l-1-8z" fill="#6e1015" />
      </svg>
      <i class="app-caret"></i>
    </div>

    <div class="command">
      <div class="cmd-tools">
        <span class="cmd-grip"></span>
        <span class="cmd-x">✕</span>
        <svg class="cmd-wrench" width="16" height="16" viewBox="0 0 16 16">
          <path d="M1 14l1 1 7-7c2 1 5 0 6-3l-3 1-2-2 1-3c-3 0-5 3-4 6z" fill="none" stroke="#666" />
        </svg>
      </div>
      <div class="cmd-input">
        <Ico n="l-term" :s="16" />
        <i class="caret dark"></i>
        <span class="cmd-text">B</span><span class="cmd-cursor"></span>
      </div>
    </div>

    <div class="suggest">
      <div class="s-row selected">
        <Ico n="i-create" :s="16" /><span class="s-text">B (BLOCK)</span>
        <span class="s-help">?</span>
        <Ico n="l-web" :s="17" />
        <span class="s-thumb"><i></i></span>
      </div>
      <div v-for="r in suggestions" :key="r.text" class="s-row">
        <Ico :n="r.icon" :s="16" /><span class="s-text">{{ r.text }}</span>
      </div>
      <div class="s-group">
        <Ico n="l-bv" :s="18" /><b>BVMODE</b><i class="s-arrow"></i>
      </div>
      <div class="s-group">
        <Ico n="i-insert" :s="18" /><b>块: 1</b><i class="s-arrow"></i>
      </div>
    </div>

    <div class="tooltip">
      <div class="tip-desc">从选定对象创建块定义</div>
      <div class="tip-name"><Ico n="l-blocktip" :s="16" /><b>BLOCK</b></div>
      <div class="tip-help">按 <b>F1</b> 键获得更多帮助</div>
    </div>

    <div class="highlight"></div>

    <div class="brand">
      <svg width="135" height="96" viewBox="25 45 135 96" class="brand-mark">
        <path d="M34 101C30 125 70 135 95 122C115 112 128 100 132 86C118 105 85 120 60 118C45 117 38 110 42 96Z" fill="#123f96" />
        <path d="M41 87C58 62 90 50 112 54C128 57 134 66 131 76C127 66 115 60 98 59C75 58 55 70 41 87Z" fill="#8dbb25" />
        <path d="M81 69L98 78L122 90L106 108H81Z" fill="#d8dbe0" />
        <path d="M62 74L81 66V117H62Z" fill="url(#tower-fill)" />
        <path d="M42 101L56 94V114H42Z" fill="#123f96" />
        <path d="M91 90L106 84V110L91 112Z" fill="#1a4aa4" />
      </svg>
      <div class="brand-text">
        <div class="brand-cn">土木工程网</div>
        <div class="brand-url">www.civilcn.com</div>
      </div>
    </div>
  </div>
</template>

<script setup lang="ts">
import { h } from 'vue';

const Ico = (p: { n: string; s?: number }) => {
  const size = p.s ?? 32;
  return h('svg', { class: 'ico', width: size, height: size }, [h('use', { href: '#' + p.n })]);
};

// spiky star used by the "create block" icons
function burst(cx: number, cy: number, outer: number, inner: number, n: number): string {
  const pts: string[] = [];
  for (let i = 0; i < n * 2; i++) {
    const r = i % 2 ? inner : outer;
    const a = (Math.PI * i) / n;
    pts.push(`${(cx + r * Math.sin(a)).toFixed(1)},${(cy - r * Math.cos(a)).toFixed(1)}`);
  }
  return pts.join(' ');
}

const qat = [
  'q-open', 'q-save', 'q-saveas', 'q-phoneopen', 'q-phoneup', 'q-print', 'q-sheet',
  'q-undo', '^', 'q-preview', 'q-publish', 'q-redo', '^', '^'
];

const menus = [
  '文件(F)', '编辑(E)', '视图(V)', '插入(I)', '格式(O)', '工具(T)',
  '绘图(D)', '标注(N)', '修改(M)', '参数(P)', '窗口(W)', '帮助(H)'
];

const ribbonTabs = [
  '默认', '插入', '注释', '参数化', '可视化', '视图', '管理', '输出', '附加模块', '协作', '精选应用'
];

const drawTools = [
  'd-line', 'd-dim', 'd-parc', 'd-poly', 'd-rect', 'd-arc', 'd-circle',
  'd-cloud', 'd-spline', 'd-ellipse', 'd-elarc', 'd-insert', 'd-create'
];

const modifyTools = [
  'm-erase', 'm-copy', 'm-mirror', 'm-offset', 'm-array', 'm-move', 'm-rotate', 'm-scale', 'm-stretch'
];

const suggestions = [
  { icon: 'l-explode', text: 'BREAKUP (EXPLODE)' },
  { icon: 'l-hatch', text: 'BH (HATCH)' },
  { icon: 'l-boundary', text: 'BO (BOUNDARY)' },
  { icon: 'l-break', text: 'BR (BREAK)' },
  { icon: 'i-bedit', text: 'BE (BEDIT)' },
  { icon: 'l-check', text: 'BC (BCLOSE)' }
];
</script>

<style scoped>
.app {
  position: relative;
  width: 1080px;
  height: 783px;
  overflow: hidden;
  display: flex;
  flex-direction: column;
  background: #d8d8d8;
  color: #555;
  font: 12px/17px "Noto Sans", "Noto Sans CJK SC", sans-serif;
}

.defs {
  position: absolute;
}

i {
  font-style: normal;
}

.caret {
  display: inline-block;
  width: 0;
  height: 0;
  border: 3px solid transparent;
  border-top: 4px solid #777;
  border-bottom: 0;
  flex: none;
}

/* title rows */
.titlebar {
  display: flex;
  align-items: center;
  height: 23px;
  padding-left: 51px;
  flex: none;
}

.qat {
  display: flex;
  align-items: center;
  gap: 8px;
  width: 332px;
  flex: none;
}

.qat .caret {
  margin-right: -1px;
}

.doc-name {
  width: 117px;
  flex: none;
  font-size: 14px;
}

.arrow-right {
  width: 0;
  height: 0;
  border: 3.5px solid transparent;
  border-left: 4px solid #666;
  border-right: 0;
  margin-right: 8px;
  flex: none;
}

.search {
  width: 178px;
  height: 21px;
  flex: none;
  background: #fff;
  padding-left: 3px;
  font: italic 11px/21px "Noto Sans CJK SC", sans-serif;
  color: #777;
  box-sizing: border-box;
}

.account {
  display: flex;
  align-items: center;
  margin-left: 5px;
  width: 248px;
  height: 23px;
  flex: none;
  border-bottom: 1px solid #c4c4c4;
  gap: 4px;
  box-sizing: border-box;
  margin-top: 1px;
}

.user-ico {
  margin-left: 5px;
}

.login {
  margin-left: 2px;
  color: #444;
  flex: none;
  white-space: nowrap;
}

.login-caret {
  margin-left: 54px;
}

.cart {
  margin-left: 8px;
  margin-right: 4px;
}

.vsep {
  width: 1px;
  height: 18px;
  flex: none;
  background: #bbb;
  margin: 0 6px 0 3px;
}

.help {
  width: 15px;
  height: 15px;
  flex: none;
  border: 1.500px solid #223a66;
  border-radius: 50%;
  text-align: center;
  font: 700 12px/15px "Liberation Sans", sans-serif;
  color: #1a46a8;
  background: #fff;
}

.winbtns {
  display: flex;
  align-items: center;
  position: absolute;
  color: #555;
}

.winbtns.top {
  left: 1014px;
  top: 5px;
  gap: 12px;
}

.winbtns.inner {
  left: 1030px;
  top: 27px;
  gap: 7px;
}

.w-min {
  width: 8px;
  height: 2px;
  background: #555;
  margin-top: 12px;
}

.w-max {
  width: 11px;
  height: 10px;
  border: 1px solid #555;
  border-top-width: 2px;
}

.w-restore {
  width: 8px;
  height: 7px;
  border: 1px solid #555;
  border-top-width: 2px;
  margin-left: 1px;
  box-shadow: 3px -3px 0 -1px #d8d8d8, 3px -3px 0 0 #555;
}

.w-close {
  font: 15px/16px "DejaVu Sans", sans-serif;
  width: 14px;
  text-align: center;
  margin-left: 1px;
}

.winbtns.top .w-close {
  margin-left: 2px;
}

.menubar {
  display: flex;
  align-items: center;
  gap: 25.300px;
  height: 23px;
  padding: 1px 0 0 56px;
  box-sizing: border-box;
  flex: none;
  border-bottom: 1px solid #ededed;
  color: #666;
}

/* ribbon */
.ribbon-tabs {
  display: flex;
  align-items: flex-end;
  height: 21px;
  padding-left: 14px;
  gap: 20px;
  flex: none;
  color: #777;
}

.rt {
  line-height: 18px;
}

.rt.active {
  background: #f5f5f5;
  color: #444;
  padding: 0 9px;
  margin: 0 -9px;
  border-radius: 2px 2px 0 0;
}

.rt-toggle {
  width: 14px;
  height: 9px;
  border: 1px solid #555;
  border-radius: 3px;
  margin: 0 0 4px 11px;
  display: flex;
  align-items: center;
  justify-content: center;
}

.rt-toggle i {
  width: 0;
  height: 0;
  border: 3px solid transparent;
  border-bottom: 3px solid #333;
  border-top: 0;
}

.ribbon-tabs > .caret {
  margin: 0 0 7px -15px;
}

.ribbon {
  display: flex;
  height: 97px;
  margin-left: 3px;
  width: 1065px;
  gap: 1px;
  flex: none;
}

.panel {
  display: flex;
  flex-direction: column;
  background: #f5f5f5;
  position: relative;
}

.body {
  display: grid;
  height: 79px;
  padding-top: 7px;
  box-sizing: border-box;
  align-items: start;
}

.label {
  height: 18px;
  line-height: 19px;
  text-align: center;
  position: relative;
}

.label .caret {
  margin-left: 7px;
  vertical-align: 2px;
}

.launcher {
  position: absolute;
  right: 4px;
  bottom: 2px;
  font-size: 9px;
  line-height: 10px;
}

.tool {
  display: flex;
  flex-direction: column;
  align-items: center;
  text-align: center;
  position: relative;
  line-height: 16px;
}

.tool span {
  margin-top: 4px;
  white-space: nowrap;
}

.tool .caret {
  margin-top: 4px;
}

.tool .side {
  position: absolute;
  right: 0;
  top: 52px;
  margin: 0;
}

.p-block { width: 88px; }
.p-block .body { grid-template-columns: 40px 44px; }

.p-def { width: 197px; }
.p-def .body { grid-template-columns: 44px 68px 28px 50px; padding-left: 8px; }

.p-ref { width: 301px; }
.p-ref .body { grid-template-columns: 38px 40px 38px auto; }

.p-input { width: 211px; }
.p-input .body { grid-template-columns: 50px 118px 43px; }

.p-data { width: 110px; }
.p-data .body { grid-template-columns: 42px auto; }

.p-link { width: 82px; }
.p-link .body { grid-template-columns: 56px auto; }

.p-loc { width: 70px; }
.p-loc .body { grid-template-columns: 1fr; }

.smalls {
  display: flex;
  flex-direction: column;
  gap: 6px;
  padding-left: 5px;
}

.small {
  display: flex;
  align-items: center;
  gap: 5px;
  height: 18px;
  white-space: nowrap;
}

.small .caret {
  margin-left: 4px;
}

.divided {
  border-left: 1px solid #ddd;
  margin-left: 3px;
  padding-left: 9px;
  height: 68px;
  margin-top: -2px;
  word-spacing: 2px;
}

.stack {
  padding-left: 2px;
  gap: 7px;
}

/* document tabs */
.doc-tabs {
  display: flex;
  height: 24px;
  padding: 1px 0 0 22px;
  flex: none;
  box-sizing: border-box;
  margin-top: 3px;
}

.dt {
  display: flex;
  align-items: center;
  height: 23px;
  padding-left: 11px;
  box-sizing: border-box;
  clip-path: polygon(0 100%, 6px 20%, 14px 0, calc(100% - 14px) 0, calc(100% - 6px) 20%, 100% 100%);
}

.dt-start {
  width: 124px;
  background: #e2e2e2;
  color: #888;
  padding-left: 12px;
}

.dt-active {
  width: 126px;
  background: #f3f3f3;
  color: #555;
  padding-left: 10px;
  letter-spacing: 0.2px;
}

.dt-x {
  margin-left: 31px;
  font-weight: 700;
  color: #888;
}

.dt-plus {
  width: 24px;
  background: #e8e8e8;
  color: #888;
  font: 700 16px/23px "Liberation Sans", sans-serif;
  padding-left: 7px;
  margin-left: 4px;
}

/* toolbars */
.toolrow {
  display: flex;
  gap: 2px;
  height: 47px;
  padding: 4px 0 4px 2px;
  box-sizing: border-box;
  background: #f3f3f3;
  flex: none;
}

.tb {
  display: flex;
  align-items: center;
  height: 39px;
  border: 1px solid #bbb;
  box-sizing: border-box;
  padding-left: 3px;
  background: #f5f5f5;
}

.tb-layer {
  width: 464px;
  gap: 7px;
}

.tb-edit {
  width: 409px;
  gap: 5px;
}

.tb-book {
  width: 126px;
  gap: 6px;
}

.grip {
  width: 2px;
  height: 14px;
  margin: -10px -3px 0 0;
  border-left: 2px dotted #999;
  flex: none;
}

.layer-select {
  display: flex;
  align-items: center;
  width: 298px;
  height: 25px;
  margin: -10px -2px 0 -4px;
  padding-left: 5px;
  background: #d8d8d8;
  border: 1px solid #bbb;
  box-sizing: border-box;
  border-radius: 2px;
  position: relative;
  flex: none;
}

.layer-select::after {
  content: "";
  position: absolute;
  left: 1px;
  top: 24px;
  width: 1px;
  height: 11px;
  background: #999;
}

.layer-icons {
  flex: none;
}

.swatch {
  width: 12px;
  height: 12px;
  background: #ff00ff;
  border: 1px solid #000;
  box-sizing: border-box;
}

.layer-name {
  margin-left: 5px;
  color: #111;
}

.chev {
  margin-left: auto;
  margin-right: 5px;
  line-height: 10px;
  margin-top: -6px;
}

.tb-sep {
  width: 1px;
  height: 32px;
  background: #888;
  flex: none;
}

.nudge1 {
  margin-left: 1px;
}

.nudge2 {
  margin-left: 2px;
}

/* drawing area */
.workspace {
  display: grid;
  grid-template-columns: 46px 965px 17px 52px;
  grid-template-rows: 478px 16px;
  height: 494px;
  flex: none;
  background: #f0f0f0;
}

.side-tools {
  display: flex;
  flex-direction: column;
  align-items: center;
  gap: 6px;
  background: #f5f5f5;
  overflow: hidden;
  position: relative;
}

.side-tools.left {
  grid-row: 1 / 3;
  width: 41px;
  margin-left: 1px;
  box-sizing: border-box;
  border-left: 1px solid #bbb;
  border-right: 1px solid #bbb;
  padding-top: 14px;
}

.side-tools.right {
  grid-row: 1 / 3;
  grid-column: 4;
  margin-left: 4px;
  width: 41px;
  box-sizing: border-box;
  border: 1px solid #bbb;
  padding-top: 10px;
  gap: 6px;
}

.grip-h {
  position: absolute;
  top: 2px;
  left: 4px;
  width: 14px;
  height: 0;
  border-top: 2px dotted #999;
}

.canvas {
  position: relative;
  background-color: #000;
  background-image:
    linear-gradient(90deg, #2b2b38 1px, transparent 1px),
    linear-gradient(#2b2b38 1px, transparent 1px),
    linear-gradient(90deg, #14141b 1px, transparent 1px),
    linear-gradient(#14141b 1px, transparent 1px);
  background-size: 45.2px 45.2px, 45.2px 45.2px, 9.04px 9.04px, 9.04px 9.04px;
  background-position: 13px 1.600px, 13px 1.600px, 4px 1.600px, 4px 1.600px;
  overflow: hidden;
}

.drawing {
  position: absolute;
  inset: 0;
}

.number {
  position: absolute;
  left: 134px;
  top: 67px;
  font: 36px/50px "Liberation Sans", sans-serif;
  color: #ff00ff;
}

.compass {
  position: absolute;
  left: 869px;
  top: 15px;
  width: 80px;
  height: 80px;
}

.ring {
  position: absolute;
  inset: 0;
  border: 10px solid #3c3c3c;
  border-radius: 50%;
  box-sizing: border-box;
}

.cube {
  position: absolute;
  left: 23px;
  top: 23px;
  width: 34px;
  height: 34px;
  background: #a8a8a8;
  display: flex;
  align-items: center;
  justify-content: center;
}

.cube span {
  width: 18px;
  height: 18px;
  background: #9a9a9e;
  position: relative;
}

.cube span::after {
  content: "";
  position: absolute;
  left: 8px;
  top: 3px;
  width: 2px;
  height: 12px;
  background: #444;
}

.dir {
  position: absolute;
  color: #9a9a9a;
  line-height: 14px;
}

.dir.n { left: 34px; top: -4px; }
.dir.s { left: 34px; top: 72px; }
.dir.w { left: -4px; top: 33px; }
.dir.e { left: 71px; top: 33px; }

.wcs {
  position: absolute;
  left: 884px;
  top: 115px;
  width: 47px;
  height: 17px;
  border-radius: 4px;
  background: #8a8a94;
  color: #555;
  font: 11px/17px "Liberation Sans", sans-serif;
  padding-left: 4px;
  box-sizing: border-box;
}

.wcs i {
  position: absolute;
  right: 5px;
  top: 7px;
  border: 4px solid transparent;
  border-top: 4px solid #a8a8b0;
  border-bottom: 0;
}

.navbar {
  position: absolute;
  left: 929px;
  top: 158px;
  width: 32px;
  height: 320px;
  background: #4b4b4b;
  border-radius: 4px 4px 0 0;
  overflow: hidden;
}

.vscroll {
  grid-row: 1 / 3;
  position: relative;
}

.vscroll i {
  position: absolute;
  left: 5px;
  top: 7px;
  width: 6px;
  height: 6px;
  border-left: 2px solid #444;
  border-top: 2px solid #444;
  transform: rotate(45deg);
}

.hscroll {
  grid-column: 2;
  grid-row: 2;
  position: relative;
}

.hscroll i {
  position: absolute;
  left: 6px;
  top: 6px;
  width: 5px;
  height: 5px;
  border-left: 2px solid #444;
  border-top: 2px solid #444;
  transform: rotate(-45deg);
}

/* bottom tabs */
.layout-tabs {
  display: flex;
  align-items: center;
  height: 20px;
  padding-left: 14px;
  gap: 6px;
  flex: none;
  border-top: 1px solid #c8c8c8;
  box-sizing: border-box;
}

.lt {
  width: 45px;
  height: 19px;
  line-height: 19px;
  text-align: center;
  background: #e0e0e0;
  color: #888;
  clip-path: polygon(0 0, 100% 0, calc(100% - 6px) 100%, 6px 100%);
}

.lt.active {
  background: #f5f5f5;
  color: #444;
  font-weight: 500;
}

.lt.plus {
  width: 17px;
  font: 700 15px/19px "Liberation Sans", sans-serif;
  margin-left: 6px;
}

.statusbar {
  display: flex;
  gap: 4px;
  padding: 4px 0 0 526px;
  height: 30px;
  box-sizing: border-box;
  flex: none;
}

.sb-group {
  display: flex;
  align-items: center;
  height: 23px;
  background: #f2f2f2;
  width: 93px;
  gap: 2px;
}

.sb-group .caret {
  margin-left: 6px;
}

.sb-group.second {
  width: 83px;
}

.sb-group.second .sb-btn:last-child {
  margin-left: 5px;
}

.sb-model {
  color: #333;
  font-weight: 500;
  width: 29px;
  padding-left: 1px;
  box-sizing: border-box;
}

.sb-btn {
  width: 22px;
  height: 23px;
  display: flex;
  align-items: center;
  justify-content: center;
  box-sizing: border-box;
  flex: none;
}

.sb-btn.on {
  background: #cce4fa;
  border: 1px solid #36608a;
}

/* floating pieces */
.app-button {
  position: absolute;
  left: 1px;
  top: 1px;
  width: 41px;
  height: 41px;
  box-sizing: border-box;
  border: 1px solid #000;
  background: linear-gradient(#5e5e5e, #6f6f6f 50%, #a4a4a4);
  padding: 2px 0 0 1px;
}

.app-caret {
  position: absolute;
  right: 3px;
  top: 20px;
  border: 4px solid transparent;
  border-top: 4px solid #111;
  border-bottom: 0;
}

.command {
  position: absolute;
  left: 285px;
  top: 707px;
  width: 421px;
  height: 26px;
  display: flex;
}

.cmd-tools {
  display: flex;
  align-items: center;
  width: 56px;
  flex: none;
  background: #d0d0d0;
  border-radius: 3px 0 0 3px;
  gap: 5px;
  padding-left: 4px;
  box-sizing: border-box;
}

.cmd-wrench {
  margin-left: 5px;
}

.cmd-grip {
  width: 6px;
  height: 18px;
  background-image: radial-gradient(#666 1px, transparent 1.200px);
  background-size: 3px 3px;
}

.cmd-x {
  font: 700 12px/16px "DejaVu Sans", sans-serif;
  color: #666;
}

.cmd-input {
  flex: 1;
  background: #fff;
  display: flex;
  align-items: center;
  padding-left: 4px;
}

.cmd-input .dark {
  margin: 0 5px 0 3px;
  border-top-color: #555;
}

.cmd-text {
  font: 11px/14px "Liberation Sans", sans-serif;
  color: #333;
}

.cmd-cursor {
  width: 1px;
  height: 13px;
  background: #111;
  margin-left: 1px;
}

.suggest {
  position: absolute;
  left: 342px;
  top: 495px;
  width: 319px;
  background: #f5f5f5;
}

.s-row {
  display: flex;
  align-items: center;
  gap: 4px;
  height: 24px;
  padding: 2px 0 0 3px;
  box-sizing: border-box;
  overflow: hidden;
}

.s-row.selected {
  padding-top: 0;
  background: linear-gradient(#dcdcdc 22px, #f5f5f5 22px);
  position: relative;
}

.s-text {
  font: 11.300px/14px "DejaVu Sans Mono", monospace;
  color: #555;
  white-space: pre;
}

.s-row.selected .s-text {
  padding-top: 2px;
}

.s-help {
  margin-left: auto;
  width: 16px;
  height: 16px;
  box-sizing: border-box;
  border: 1px solid #555;
  border-radius: 50%;
  text-align: center;
  font: 11px/14px "Liberation Sans", sans-serif;
  color: #555;
  background: #eee;
}

.s-thumb {
  width: 15px;
  height: 22px;
  background: #f0f0f0;
  margin: 0 0 2px 2px;
  display: flex;
  justify-content: center;
  padding-top: 2px;
  box-sizing: border-box;
}

.s-thumb i {
  width: 5px;
  height: 18px;
  background: #ccc;
}

.s-group {
  display: flex;
  align-items: center;
  gap: 4px;
  height: 22px;
  margin-top: -1px;
  padding-left: 3px;
  background: #e6e6e6;
  border-top: 1px solid #bdbdbd;
  box-sizing: border-box;
  position: relative;
  color: #777;
  font-size: 13px;
}

.s-group + .s-group {
  margin-top: 0;
  height: 22px;
}

.s-arrow {
  position: absolute;
  right: 7px;
  top: 7px;
  border: 3.500px solid transparent;
  border-right: 4px solid #555;
  border-left: 0;
}

.tooltip {
  position: absolute;
  left: 458px;
  top: 523px;
  width: 136px;
  height: 87px;
  box-sizing: border-box;
  background: #f1f3f9;
  border: 1px solid #83838e;
  padding: 7px 6px 0;
  color: #666;
}

.tip-desc {
  height: 25px;
  margin: 0 -4px;
  padding: 0 4px;
  border-bottom: 1px solid #bbb;
  white-space: nowrap;
}

.tip-name {
  display: flex;
  align-items: center;
  gap: 5px;
  margin-top: 4px;
  height: 18px;
}

.tip-help {
  margin-top: 7px;
  font-weight: 500;
  white-space: nowrap;
}

.highlight {
  position: absolute;
  left: 330px;
  top: 490px;
  width: 342px;
  height: 30px;
  box-sizing: border-box;
  border: 4px solid #e23434;
  border-radius: 15px;
}

.brand {
  position: absolute;
  left: 706px;
  top: 596px;
  width: 374px;
  height: 187px;
  background: #fff;
  display: flex;
  padding: 45px 0 0 25px;
  box-sizing: border-box;
}

.brand-mark {
  flex: none;
  margin-right: -25px;
  filter: blur(0.4px);
}

.brand-text {
  padding-top: 19px;
  filter: blur(0.5px);
  color: #111;
}

.brand-cn {
  font: 900 41px/41px "Noto Sans CJK SC", sans-serif;
  transform: skewX(-6deg);
  white-space: nowrap;
}

.brand-url {
  font: italic 27px/30px "Liberation Sans", sans-serif;
  color: #222;
  margin-top: -2px;
  white-space: nowrap;
}
</style>

<style>
html,
body {
  margin: 0;
  background: #d8d8d8;
}

.ico {
  flex: none;
  fill: none;
  stroke: #6b6b6b;
  stroke-width: 1.100;
  overflow: visible;
}
</style>
